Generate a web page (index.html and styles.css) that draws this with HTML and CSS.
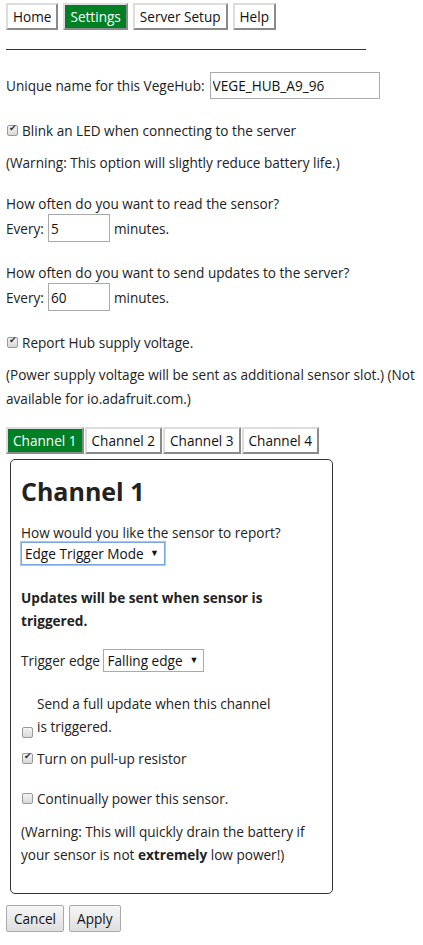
FILE: index.html
```html
<!DOCTYPE html>
<html>
  <head>
    <title>VegeHub Settings</title>
    <link rel="stylesheet" href="styles.css">
  </head>

  <body>
    <div class="menu">
      <button class="tab">Home</button>
      <button class="tab active">Settings</button>
      <button class="tab">Server Setup</button>
      <button class="tab">Help</button>
    </div>
    <hr class="rule">

    <form id="settings-form">
      <p class="name-row">
        <label for="hub-name">Unique name for this VegeHub:</label>
        <input type="text" id="hub-name" class="name-field" value="VEGE_HUB_A9_96">
      </p>

      <p class="check-row">
        <input type="checkbox" class="box" id="blink" checked>
        <label for="blink">Blink an LED when connecting to the server</label>
      </p>
      <p class="note">(Warning: This option will slightly reduce battery life.)</p>

      <p class="question">How often do you want to read the sensor?</p>
      <p class="every">Every: <input type="text" class="num-field" value="5"> minutes.</p>

      <p class="question second">How often do you want to send updates to the server?</p>
      <p class="every">Every: <input type="text" class="num-field" value="60"> minutes.</p>

      <p class="check-row voltage-row">
        <input type="checkbox" class="box" id="report-voltage" checked>
        <label for="report-voltage">Report Hub supply voltage.</label>
      </p>
      <p class="note">(Power supply voltage will be sent as additional sensor slot.) (Not available for io.adafruit.com.)</p>

      <div class="channels">
        <button type="button" class="tab active">Channel 1</button><button type="button" class="tab">Channel 2</button><button type="button" class="tab">Channel 3</button><button type="button" class="tab">Channel 4</button>
      </div>

      <div class="channel-box">
        <h1>Channel 1</h1>
        <p class="mode-label">How would you like the sensor to report?</p>
        <span class="select-wrap">
          <select class="mode-select focus">
            <option>Edge Trigger Mode</option>
          </select>
        </span>

        <p class="strong-note">Updates will be sent when sensor is triggered.</p>

        <p class="edge-row">
          Trigger edge
          <span class="select-wrap">
            <select class="mode-select">
              <option>Falling edge</option>
            </select>
          </span>
        </p>

        <p class="check-row wrap-row">
          <input type="checkbox" class="box" id="full-update">
          <label for="full-update" class="wrap-label">Send a full update when this channel is triggered.</label>
        </p>

        <p class="check-row pullup-row">
          <input type="checkbox" class="box" id="pullup" checked>
          <label for="pullup">Turn on pull-up resistor</label>
        </p>

        <p class="check-row power-row">
          <input type="checkbox" class="box" id="power">
          <label for="power">Continually power this sensor.</label>
        </p>
        <p class="box-note">(Warning: This will quickly drain the battery if your sensor is not <b>extremely</b> low power!)</p>
      </div>

      <div class="actions">
        <button type="button" class="plain-btn">Cancel</button>
        <button type="button" class="plain-btn">Apply</button>
      </div>
    </form>
  </body>
</html>
```

FILE: styles.css
```css
body {
  margin: 0;
  padding: 3px 6px;
  font-family: "Open Sans", "Noto Sans", sans-serif;
  font-size: 13.6px;
  color: #222;
  background: #fff;
}

p {
  margin: 0;
}

.menu {
  display: flex;
  gap: 5px;
}

.tab {
  font-family: inherit;
  font-size: 13.6px;
  color: #111;
  background: #fff;
  padding: 2px 5px;
  height: 27px;
  border: 2px solid;
  border-color: #ddd #8a8a8a #8a8a8a #ddd;
  cursor: pointer;
}

.tab.active {
  background: #008025;
  color: #fff;
}

.rule {
  width: 360px;
  margin: 19px 0 0 0;
  border: none;
  border-top: 1px solid #333;
}

.name-row {
  margin-top: 22px;
  display: flex;
  align-items: center;
  gap: 5px;
}

.name-field,
.num-field {
  font-family: inherit;
  font-size: 13.6px;
  color: #111;
  border: 1px solid #aaa;
  padding: 0 2px;
  box-sizing: border-box;
}

.name-field {
  width: 170px;
  height: 27px;
}

.num-field {
  width: 62px;
  height: 28px;
}

.check-row {
  display: flex;
  align-items: center;
  gap: 4px;
  margin-top: 22px;
}

.voltage-row {
  margin-top: 22px;
}

.box {
  appearance: none;
  -webkit-appearance: none;
  width: 11px;
  height: 11px;
  margin: 0 0 0 1px;
  border: 1px solid #999;
  border-radius: 2px;
  background: linear-gradient(#f4f4f4, #d8d8d8);
  position: relative;
  flex: none;
}

.box:checked::after {
  content: "\2714";
  position: absolute;
  left: 1px;
  top: -3px;
  font-size: 9px;
  color: #333;
}

.note {
  margin-top: 11px;
  line-height: 24px;
}

.question {
  margin-top: 19px;
}

.question.second {
  margin-top: 21px;
}

.every {
  margin-top: 1px;
  display: flex;
  align-items: center;
  gap: 4px;
}

.channels {
  display: flex;
  gap: 1px;
  margin-top: 16px;
}

.channels .tab {
  padding: 2px 5px;
}

.channel-box {
  margin: 5px 0 0 4px;
  width: 301px;
  border: 1px solid #333;
  border-radius: 5px;
  padding: 14px 10px 27px 10px;
}

.channel-box h1 {
  margin: 0;
  font-size: 25px;
  font-weight: bold;
  color: #222;
}

.mode-label {
  margin-top: 15px;
}

.select-wrap {
  position: relative;
  display: inline-block;
}

.select-wrap::after {
  content: "\25BC";
  position: absolute;
  right: 6px;
  top: 4px;
  font-size: 9px;
  color: #111;
  pointer-events: none;
}

.mode-select {
  appearance: none;
  -webkit-appearance: none;
  font-family: inherit;
  font-size: 13.6px;
  color: #111;
  background: #fff;
  border: 1px solid #aaa;
  border-radius: 0;
  padding: 0 20px 0 3px;
  height: 23px;
}

.mode-select.focus {
  border-color: #7aa6e6;
  box-shadow: 0 0 0 1px #a9c6f1;
}

.strong-note {
  width: 255px;
  margin-top: 21px;
  font-weight: bold;
  line-height: 23px;
}

.edge-row {
  margin-top: 17px;
}

.wrap-row {
  align-items: flex-end;
  margin-top: 20px;
}

.wrap-label {
  width: 240px;
  line-height: 23px;
}

.pullup-row {
  margin-top: 11px;
}

.power-row {
  margin-top: 21px;
}

.box-note {
  margin-top: 12px;
  line-height: 23px;
}

.actions {
  display: flex;
  gap: 5px;
  margin-top: 11px;
}

.plain-btn {
  font-family: inherit;
  font-size: 13.6px;
  color: #111;
  height: 27px;
  padding: 0 7px;
  border: 1px solid #aaa;
  border-radius: 2px;
  background: linear-gradient(#f6f6f6, #dedede);
}
```
